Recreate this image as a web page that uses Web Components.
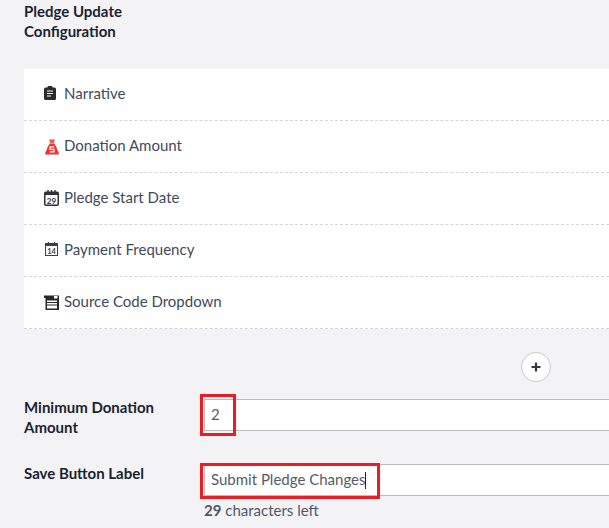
<!DOCTYPE html>
<html><head><meta charset="utf-8">
<style>
html,body{margin:0;padding:0;height:528px;overflow:hidden;background:#f3f3f6;font-family:Lato,"Liberation Sans",sans-serif;}
</style></head>
<body>
<template id="t-page"><style>
:host{display:flex;flex-direction:column;padding:1px 0 0 24px;width:609px;box-sizing:border-box;color:#16325c;font-size:15px;line-height:20px}
h2{margin:0;width:140px;font:700 15px/20px Lato,sans-serif;color:#1b2330}
.card{margin-top:28px;background:#fff;display:flex;flex-direction:column}
.add{display:flex;justify-content:flex-end;padding:23px 58px 17px 0}
</style><h2><slot name="title"></slot></h2><div class="card"><slot name="rows"></slot></div><div class="add"><slot name="add"></slot></div><slot></slot></template>

<template id="t-row"><style>
:host{display:flex;align-items:center;height:52px;box-sizing:border-box;border-bottom:1px dashed #d5d5d5;padding:0 0 3px 20px;font-size:15px;color:#3f4a5c}
.i{width:15px;height:16px;margin-right:5px;display:flex;align-items:center;justify-content:center;flex:none}
</style><span class="i"><slot name="icon"></slot></span><slot></slot></template>

<template id="t-plus"><style>
:host{display:flex;align-items:center;justify-content:center;width:30px;height:30px;box-sizing:border-box;border:1px solid #c9c9c9;border-radius:50%;background:#fff}
</style><svg width="12" height="12" viewBox="0 0 12 12"><path d="M6 1.5v9M1.5 6h9" stroke="#2f3a4a" stroke-width="2.2" fill="none"/></svg></template>

<template id="t-field"><style>
:host{display:grid;grid-template-columns:180px 1fr;position:relative;font-size:15px}
.l{font-weight:700;color:#1b2330;line-height:20px;margin-top:var(--lm,-2px);width:150px}
.box{height:32px;box-sizing:border-box;background:#fff;border:solid #bcbcbc;border-width:1px 0 1px 1px;padding:0 0 2px 6px;display:flex;align-items:center;font-size:15px;color:#555b68;white-space:nowrap}
.h{font-size:15px;line-height:20px;color:#4f5766;height:var(--hh,0);overflow:hidden;padding-top:var(--ht,0)}
.h b{color:#2a3340}
</style><div class="l"><slot name="label"></slot></div><div><div class="box"><slot name="value"></slot></div><div class="h"><slot name="help"></slot></div></div><slot name="mark"></slot></template>

<template id="t-mark"><style>
:host{display:block;position:absolute;box-sizing:border-box;border:3px solid #ed1c24;pointer-events:none}
</style></template>

<demo-page>
<span slot="title">Pledge Update Configuration</span>
<demo-row slot="rows"><svg slot="icon" style="margin-left:-3px" width="12" height="14" viewBox="0 0 12 14"><rect x="0" y="1.5" width="12" height="12.5" rx="1.5" fill="#2b2b30"/><rect x="3.5" y="0" width="5" height="3" rx="1" fill="#2b2b30"/><path d="M3 5h6M3 7.5h6M3 10h4" stroke="#fff" stroke-width="1.2"/></svg>Narrative</demo-row>
<demo-row slot="rows"><svg slot="icon" style="margin:3px 0 0 1px" width="14" height="16" viewBox="0 0 14 16"><path d="M4 .5h6L8.8 4H5.2z" fill="#ef5a4f"/><path d="M4.6 4.5h4.8l4.4 9.5q.4 1.6-1 1.6H1.2q-1.4 0-1-1.6z" fill="#f0342f"/><rect x="2.6" y="6.5" width="8.8" height="7.5" rx="1.5" fill="#f0342f"/><path d="M9.2 7.8H5v2.6h4v2.4H4.8" stroke="#fff" stroke-width="1.2" fill="none"/></svg>Donation Amount</demo-row>
<demo-row slot="rows"><svg slot="icon" style="margin-top:2px" width="15" height="16" viewBox="0 0 15 16"><rect x=".75" y="2.25" width="13.5" height="13" rx="1" fill="#fff" stroke="#2d3038" stroke-width="1.5"/><rect x="1" y="2" width="13" height="3" fill="#2d3038"/><path d="M4 0v3.5M7.5 0v3.5M11 0v3.5" stroke="#2d3038" stroke-width="1.4"/><text x="7.5" y="13.5" font-family="Lato,sans-serif" font-size="8" font-weight="700" text-anchor="middle" fill="#2d3038">29</text></svg>Pledge Start Date</demo-row>
<demo-row slot="rows"><svg slot="icon" width="13" height="14" viewBox="0 0 13 14"><rect x=".5" y="1.5" width="12" height="12" fill="#fff" stroke="#3a3f48"/><rect x="0" y="1" width="13" height="3" fill="#3a3f48"/><path d="M3.5 0v3M9.5 0v3" stroke="#3a3f48" stroke-width="1.2"/><text x="6.5" y="12.3" font-family="Lato,sans-serif" font-size="7.5" font-weight="700" text-anchor="middle" fill="#3a3f48">14</text></svg>Payment Frequency</demo-row>
<demo-row slot="rows"><svg slot="icon" style="margin-top:3px" width="15" height="15" viewBox="0 0 15 15"><path d="M0 .5h15v14.5H1.5V3H0z" fill="#25272d"/><rect x="3" y="5.5" width="10" height="8" fill="#fff"/><path d="M3 7.5h10M3 10h10" stroke="#25272d" stroke-width="1"/><path d="M10 1h3.5v2.5H10z" fill="#fff"/></svg>Source Code Dropdown</demo-row>
<demo-plus slot="add"></demo-plus>
<demo-field><span slot="label">Minimum Donation Amount</span><span slot="value">2</span><demo-mark slot="mark" style="left:176px;top:-5px;width:36px;height:42px"></demo-mark></demo-field>
<demo-field style="--hh:24px;--ht:4px;--lm:-1px;margin-top:27px"><span slot="label">Save Button Label</span><span slot="value">Submit Pledge Changes<span style="display:inline-block;width:1px;height:17px;background:#1b2330;vertical-align:-4px"></span></span><span slot="help"><b>29</b> characters left</span><demo-mark slot="mark" style="left:176px;top:-1px;width:180px;height:36px"></demo-mark></demo-field>
</demo-page>
<script>
for (const [tag,id] of [['demo-page','t-page'],['demo-row','t-row'],['demo-plus','t-plus'],['demo-field','t-field'],['demo-mark','t-mark']]) {
  customElements.define(tag, class extends HTMLElement {
    constructor(){super();this.attachShadow({mode:'open'}).appendChild(document.getElementById(id).content.cloneNode(true));}
  });
}
</script>
</body></html>
